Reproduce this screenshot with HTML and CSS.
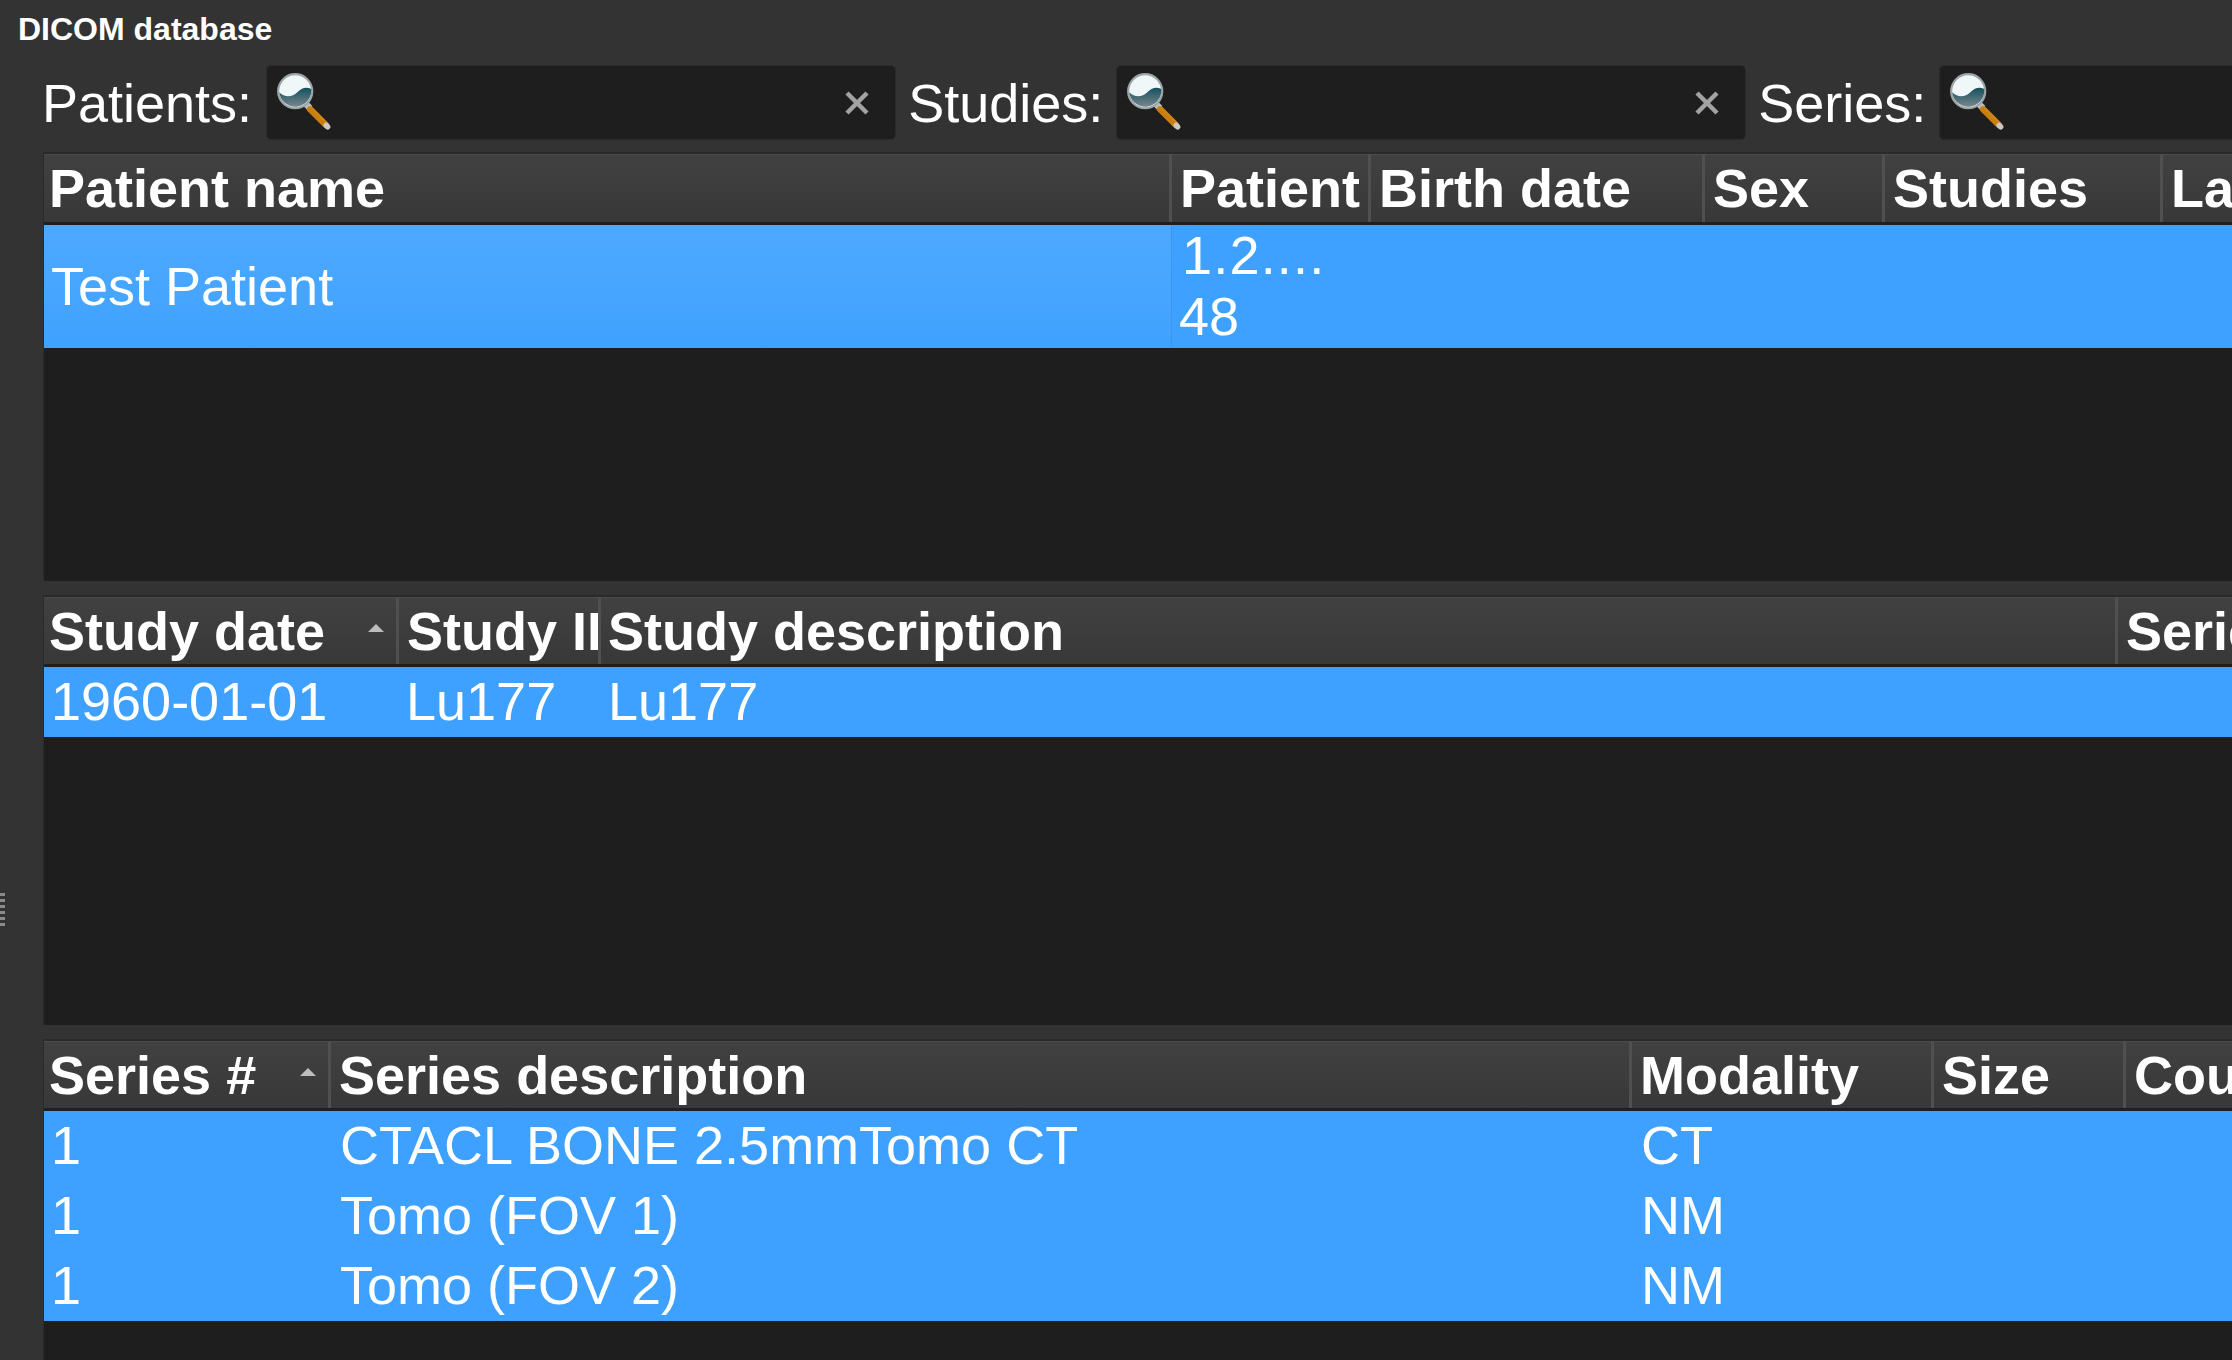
FILE: index.html
```html
<!DOCTYPE html>
<html>

<head>
    <meta charset='utf-8'>
    <title>DICOM database</title>
    <link rel="stylesheet" href="styles.css">
</head>

<body>
    <svg class="icon-defs" width="0" height="0">
        <defs>
            <linearGradient id="glassFill" x1="0" y1="0" x2="0" y2="1">
                <stop offset="0" stop-color="#14505f" />
                <stop offset="1" stop-color="#78878b" />
            </linearGradient>
            <linearGradient id="handleFill" x1="0" y1="0" x2="1" y2="-1">
                <stop offset="0" stop-color="#c97f10" />
                <stop offset="0.5" stop-color="#f3a52a" />
                <stop offset="1" stop-color="#f8d07a" />
            </linearGradient>
            <symbol id="lens" viewBox="0 0 60 60">
                <path d="M26 28 L32 34" stroke="#b9bdbd" stroke-width="6" stroke-linecap="butt" />
                <path d="M32 35 L47 50" stroke="url(#handleFill)" stroke-width="6" stroke-linecap="round" />
                <path d="M47 50 L48.5 51.5" stroke="#c9c9c9" stroke-width="5" stroke-linecap="round" />
                <circle cx="18" cy="18" r="16" fill="#f0f7f9" stroke="#9ba5a7" stroke-width="2" />
                <path d="M3 19 C8 24 15 24 20 19 C25 14 29 14 33 16 A15 15 0 0 1 3 19 Z" fill="url(#glassFill)" />
            </symbol>
            <symbol id="clear" viewBox="0 0 24 24">
                <path d="M2 2 L22 22 M22 2 L2 22" stroke="#a3a3a3" stroke-width="4.5" />
            </symbol>
        </defs>
    </svg>

    <div class="title-bar">DICOM database</div>

    <div class="content">
        <div class="side-strip">
            <div class="gripper"></div>
        </div>

        <div class="main">
            <div class="filter-bar">
                <label class="filter-label">Patients:</label>
                <div class="search-box">
                    <svg class="lens"><use href="#lens" /></svg>
                    <input class="search-input" type="text">
                    <svg class="clear"><use href="#clear" /></svg>
                </div>
                <label class="filter-label">Studies:</label>
                <div class="search-box">
                    <svg class="lens"><use href="#lens" /></svg>
                    <input class="search-input" type="text">
                    <svg class="clear"><use href="#clear" /></svg>
                </div>
                <label class="filter-label">Series:</label>
                <div class="search-box">
                    <svg class="lens"><use href="#lens" /></svg>
                    <input class="search-input" type="text">
                    <svg class="clear"><use href="#clear" /></svg>
                </div>
            </div>

            <div class="table-panel patients-panel">
                <div class="head-row patient-cols">
                    <div class="head-cell">Patient name</div>
                    <div class="head-cell">Patient</div>
                    <div class="head-cell">Birth date</div>
                    <div class="head-cell">Sex</div>
                    <div class="head-cell">Studies</div>
                    <div class="head-cell">Last date</div>
                </div>
                <div class="row patient-cols tall-row">
                    <div class="cell current-cell">Test Patient</div>
                    <div class="cell wrap-cell"><span class="id-line">1.2....</span><br>48</div>
                    <div class="cell"></div>
                    <div class="cell"></div>
                    <div class="cell"></div>
                    <div class="cell"></div>
                </div>
            </div>

            <div class="table-panel studies-panel">
                <div class="head-row study-cols">
                    <div class="head-cell">Study date<span class="sort-arrow"></span></div>
                    <div class="head-cell">Study ID</div>
                    <div class="head-cell">Study description</div>
                    <div class="head-cell">Series</div>
                </div>
                <div class="row study-cols">
                    <div class="cell">1960-01-01</div>
                    <div class="cell">Lu177</div>
                    <div class="cell">Lu177</div>
                    <div class="cell"></div>
                </div>
            </div>

            <div class="table-panel series-panel">
                <div class="head-row series-cols">
                    <div class="head-cell">Series #<span class="sort-arrow"></span></div>
                    <div class="head-cell">Series description</div>
                    <div class="head-cell">Modality</div>
                    <div class="head-cell">Size</div>
                    <div class="head-cell">Count</div>
                </div>
                <div class="row series-cols">
                    <div class="cell">1</div>
                    <div class="cell">CTACL BONE 2.5mmTomo CT</div>
                    <div class="cell">CT</div>
                    <div class="cell"></div>
                    <div class="cell"></div>
                </div>
                <div class="row series-cols">
                    <div class="cell">1</div>
                    <div class="cell">Tomo (FOV 1)</div>
                    <div class="cell">NM</div>
                    <div class="cell"></div>
                    <div class="cell"></div>
                </div>
                <div class="row series-cols">
                    <div class="cell">1</div>
                    <div class="cell">Tomo (FOV 2)</div>
                    <div class="cell">NM</div>
                    <div class="cell"></div>
                    <div class="cell"></div>
                </div>
            </div>
        </div>
    </div>
</body>

</html>
```

FILE: styles.css
```css
html,
body {
    margin: 0;
    height: 100%;
    overflow: hidden;
}

body {
    width: 2232px;
    height: 1360px;
    background-color: #333333;
    color: #ffffff;
    font-family: "Liberation Sans", Arial, sans-serif;
    font-size: 54px;
}

.icon-defs {
    display: block;
}

.title-bar {
    height: 60px;
    padding-left: 18px;
    font-size: 32px;
    font-weight: bold;
    line-height: 58px;
}

.content {
    display: flex;
    height: 1300px;
}

.side-strip {
    flex: 0 0 43px;
    padding-top: 833px;
    box-sizing: border-box;
}

.gripper {
    width: 5px;
    height: 34px;
    background-image: repeating-linear-gradient(to bottom, #8a8a8a 0, #8a8a8a 3px, transparent 3px, transparent 6px);
}

.main {
    flex: 1;
    min-width: 0;
    display: flex;
    flex-direction: column;
    overflow: hidden;
}

.filter-bar {
    display: flex;
    align-items: center;
    height: 92px;
    flex: 0 0 92px;
    padding-bottom: 7px;
    box-sizing: border-box;
    white-space: nowrap;
}

.filter-label {
    flex: none;
    margin-right: 13px;
    margin-left: -1px;
    padding-top: 1px;
    line-height: 60px;
}

.search-box {
    flex: none;
    width: 630px;
    height: 75px;
    box-sizing: border-box;
    margin-right: 13px;
    display: flex;
    align-items: center;
    background-color: #1e1e1e;
    border: 1px solid #2a2a2a;
    border-radius: 5px;
}

.lens {
    flex: none;
    width: 64px;
    height: 64px;
    margin-left: 9px;
    margin-top: 2px;
}

.search-input {
    flex: 1;
    width: 0;
    min-width: 0;
    border: none;
    background: transparent;
    font-size: 54px;
    color: #ffffff;
    outline: none;
}

.clear {
    flex: none;
    width: 24px;
    height: 24px;
    margin-right: 26px;
}

.filter-label:first-child {
    margin-right: 14px;
}

.table-panel {
    background-color: #1e1e1e;
    border-top: 2px solid #2a2a2a;
    border-left: 1px solid #2a2a2a;
    overflow: hidden;
    box-sizing: border-box;
}

.patients-panel {
    flex: 0 0 429px;
}

.studies-panel {
    flex: 0 0 430px;
    margin-top: 14px;
}

.series-panel {
    flex: 1;
    margin-top: 14px;
}

.patient-cols {
    grid-template-columns: 1128px 199px 334px 180px 278px 200px;
}

.study-cols {
    grid-template-columns: 355px 202px 1517px 200px;
}

.series-cols {
    grid-template-columns: 287px 1301px 302px 192px 200px;
}

.head-row {
    display: grid;
    height: 70px;
    box-sizing: border-box;
    border-bottom: 3px solid #1f1f1f;
    background: linear-gradient(to bottom, #414141, #383838);
    font-weight: bold;
}

.patients-panel .head-row {
    height: 71px;
}

.head-cell {
    position: relative;
    padding-left: 8px;
    line-height: 66px;
    white-space: nowrap;
    overflow: hidden;
    border-top: 1px solid #4b4b4b;
    border-right: 3px solid #505050;
    box-sizing: border-box;
}

.head-cell:first-child {
    padding-left: 5px;
}

.study-cols .head-cell:nth-child(3) {
    padding-left: 7px;
}

.sort-arrow {
    position: absolute;
    right: 12px;
    top: 26px;
    width: 0;
    height: 0;
    border-left: 8px solid transparent;
    border-right: 8px solid transparent;
    border-bottom: 8px solid #bdbdbd;
}

.row {
    display: grid;
    height: 70px;
    background-color: #3ea1ff;
    line-height: 68px;
}

.tall-row {
    height: 123px;
}

.cell {
    padding-left: 7px;
    white-space: nowrap;
    overflow: hidden;
    box-sizing: border-box;
}

.series-panel .cell {
    padding-left: 9px;
}

.series-panel .cell:first-child {
    padding-left: 7px;
}

.tall-row .cell {
    line-height: 123px;
}

.current-cell {
    background: linear-gradient(to bottom, #4ea9ff, #3fa2ff);
    border-right: 1px solid #3a97ee;
}

.tall-row .wrap-cell {
    line-height: 61px;
}

.id-line {
    margin-left: 3px;
    letter-spacing: 1.2px;
}
```
